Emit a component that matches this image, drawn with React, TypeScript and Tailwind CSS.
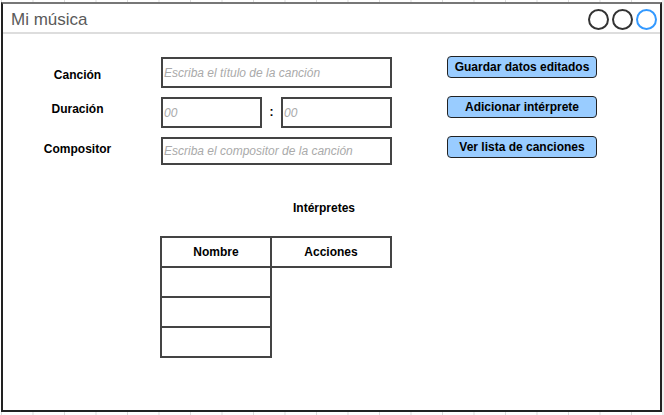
export default function App() {
  return (
    <div className="w-[664px] h-[415px] overflow-hidden bg-white bg-[linear-gradient(to_right,#dcdcdc_1px,transparent_1px)] bg-[length:31.5px_100%] bg-[position:1px_0] font-['Liberation_Sans',Arial,sans-serif] pt-[2px] pl-[1px]">
      {/* Window */}
      <div className="w-[661px] h-[410px] bg-white border-2 border-[#222] border-t-[#777] flex flex-col">
        {/* Title bar */}
        <div className="h-[30px] shrink-0 flex items-center justify-between pl-[8px] pr-[3px] border-b-2 border-[#dddddd]">
          <span className="text-[17px] text-[#5a5a5a] leading-none mt-[3px]">Mi música</span>
          <div className="flex items-center gap-[3px] mt-[2px]">
            <span className="w-[21px] h-[21px] rounded-full border-2 border-[#333]" />
            <span className="w-[21px] h-[21px] rounded-full border-2 border-[#333]" />
            <span className="w-[21px] h-[21px] rounded-full border-2 border-[#3399ff]" />
          </div>
        </div>

        {/* Body */}
        <div className="flex-1 pt-[23px] text-[12px] text-black">
          {/* Canción */}
          <div className="flex items-start h-[31px]">
            <div className="w-[149px] text-center font-bold pt-[11px] leading-[14px]">Canción</div>
            <input
              className="ml-[9px] w-[231px] h-[31px] border-2 border-[#444] pl-[1px] italic outline-none placeholder:text-[#aaaaaa]"
              placeholder="Escriba el título de la canción"
            />
            <button className="ml-[55px] -mt-[1px] w-[150px] h-[22px] rounded-[4px] border border-[#222] bg-[#99ccff] font-bold leading-none">
              Guardar datos editados
            </button>
          </div>

          {/* Duración */}
          <div className="flex items-start h-[31px] mt-[9px]">
            <div className="w-[149px] text-center font-bold pt-[5px] leading-[14px]">Duración</div>
            <input
              className="ml-[9px] w-[101px] h-[31px] border-2 border-[#444] pl-[1px] italic outline-none placeholder:text-[#aaaaaa]"
              placeholder="00"
            />
            <span className="w-[19px] text-center font-bold leading-[31px]">:</span>
            <input
              className="w-[111px] h-[31px] border-2 border-[#444] pl-[1px] italic outline-none placeholder:text-[#aaaaaa]"
              placeholder="00"
            />
            <button className="ml-[55px] -mt-[1px] w-[150px] h-[22px] rounded-[4px] border border-[#222] bg-[#99ccff] font-bold leading-none">
              Adicionar intérprete
            </button>
          </div>

          {/* Compositor */}
          <div className="flex items-start h-[28px] mt-[9px]">
            <div className="w-[149px] text-center font-bold pt-[5px] leading-[14px]">Compositor</div>
            <input
              className="ml-[9px] w-[231px] h-[28px] border-2 border-[#444] pl-[1px] italic outline-none placeholder:text-[#aaaaaa]"
              placeholder="Escriba el compositor de la canción"
            />
            <button className="ml-[55px] -mt-[1px] w-[150px] h-[22px] rounded-[4px] border border-[#222] bg-[#99ccff] font-bold leading-none">
              Ver lista de canciones
            </button>
          </div>

          {/* Intérpretes */}
          <div className="pl-[290px] mt-[36px] font-bold leading-[14px]">Intérpretes</div>

          <table className="ml-[157px] mt-[21px] border-collapse font-bold">
            <tbody>
              <tr className="h-[30px]">
                <td className="w-[110px] border-2 border-[#444] text-center p-0">Nombre</td>
                <td className="w-[120px] border-2 border-[#444] text-center p-0">Acciones</td>
              </tr>
              <tr className="h-[30px]">
                <td className="border-2 border-[#444] p-0" />
              </tr>
              <tr className="h-[30px]">
                <td className="border-2 border-[#444] p-0" />
              </tr>
              <tr className="h-[30px]">
                <td className="border-2 border-[#444] p-0" />
              </tr>
            </tbody>
          </table>
        </div>
      </div>
    </div>
  );
}
